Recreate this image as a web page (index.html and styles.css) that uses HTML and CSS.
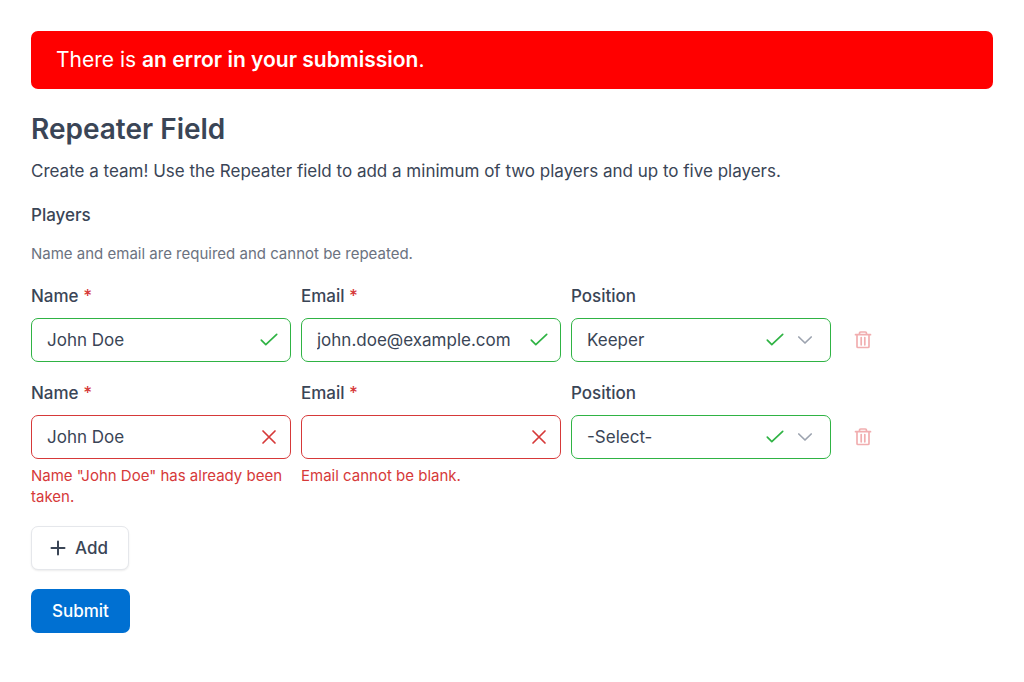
FILE: index.html
```html
<!DOCTYPE html>
<html lang="en">
<head>
    <meta charset="UTF-8">
    <meta name="viewport" content="width=device-width, initial-scale=1.0">
    <title>Repeater Field</title>
    <link rel="stylesheet" href="styles.css">
</head>
<body>

    <!-- Shared icons -->
    <svg class="sprite" aria-hidden="true">
        <symbol id="icon-check" viewBox="0 0 18 18"><path d="M1.3 9.2 L5.8 13.6 L16.7 3.4"/></symbol>
        <symbol id="icon-cross" viewBox="0 0 18 18"><path d="M3 3 L15 15 M15 3 L3 15"/></symbol>
        <symbol id="icon-chevron" viewBox="0 0 18 18"><path d="M2.8 6 L9 12 L15.2 6"/></symbol>
        <symbol id="icon-plus" viewBox="0 0 18 18"><path d="M9 2.5 V15.5 M2.5 9 H15.5"/></symbol>
        <symbol id="icon-trash" viewBox="0 0 18 18"><path d="M1.5 3.7 H16.5 M5.5 3.7 V2.2 Q5.5 1 6.7 1 H11.3 Q12.5 1 12.5 2.2 V3.7 M3 3.7 V15.5 Q3 16.5 4 16.5 H14 Q15 16.5 15 15.5 V3.7 M7.2 6.5 V13.8 M10.8 6.5 V13.8"/></symbol>
    </svg>

    <form class="form" novalidate>
        <div class="alert" role="alert">There is <strong>an error in your submission</strong>.</div>

        <h1>Repeater Field</h1>
        <p class="intro">Create a team! Use the Repeater field to add a minimum of two players and up to five players.</p>

        <h2>Players</h2>
        <p class="hint">Name and email are required and cannot be repeated.</p>

        <div class="row">
            <div class="field valid">
                <label for="name-1">Name <span class="required">*</span></label>
                <div class="control">
                    <input type="text" id="name-1" value="John Doe" required>
                    <svg class="icon status"><use href="#icon-check"/></svg>
                </div>
            </div>
            <div class="field valid">
                <label for="email-1">Email <span class="required">*</span></label>
                <div class="control">
                    <input type="email" id="email-1" value="john.doe@example.com" required>
                    <svg class="icon status"><use href="#icon-check"/></svg>
                </div>
            </div>
            <div class="field valid">
                <label for="position-1">Position</label>
                <div class="control has-select">
                    <select id="position-1">
                        <option>-Select-</option>
                        <option selected>Keeper</option>
                    </select>
                    <svg class="icon status"><use href="#icon-check"/></svg>
                    <svg class="icon chevron"><use href="#icon-chevron"/></svg>
                </div>
            </div>
            <button type="button" class="btn-remove" aria-label="Remove player">
                <svg class="icon"><use href="#icon-trash"/></svg>
            </button>
        </div>

        <div class="row">
            <div class="field invalid">
                <label for="name-2">Name <span class="required">*</span></label>
                <div class="control">
                    <input type="text" id="name-2" value="John Doe" aria-describedby="name-2-error" required>
                    <svg class="icon status"><use href="#icon-cross"/></svg>
                </div>
                <p class="error" id="name-2-error">Name "John Doe" has already been taken.</p>
            </div>
            <div class="field invalid">
                <label for="email-2">Email <span class="required">*</span></label>
                <div class="control">
                    <input type="email" id="email-2" aria-describedby="email-2-error" required>
                    <svg class="icon status"><use href="#icon-cross"/></svg>
                </div>
                <p class="error" id="email-2-error">Email cannot be blank.</p>
            </div>
            <div class="field valid">
                <label for="position-2">Position</label>
                <div class="control has-select">
                    <select id="position-2">
                        <option selected>-Select-</option>
                        <option>Keeper</option>
                    </select>
                    <svg class="icon status"><use href="#icon-check"/></svg>
                    <svg class="icon chevron"><use href="#icon-chevron"/></svg>
                </div>
            </div>
            <button type="button" class="btn-remove" aria-label="Remove player">
                <svg class="icon"><use href="#icon-trash"/></svg>
            </button>
        </div>

        <div class="actions">
            <button type="button" class="btn btn-add">
                <svg class="icon"><use href="#icon-plus"/></svg>
                Add
            </button>
            <button type="submit" class="btn btn-submit">Submit</button>
        </div>
    </form>

</body>
</html>
```
FILE: styles.css
```css
* {
    box-sizing: border-box;
}

body {
    margin: 0;
    font-family: Inter, "Liberation Sans", sans-serif;
    font-size: 17px;
    line-height: 24px;
    color: #3a4556;
    background-color: #fff;
}

h1, h2, p {
    margin: 0;
}

.sprite {
    display: none;
}

.form {
    padding: 31px;
}

.alert {
    padding: 14px 25px;
    border-radius: 7px;
    background-color: #f00;
    color: #fff;
    font-size: 21px;
    line-height: 30px;
}

.alert strong {
    font-weight: 600;
}

h1 {
    margin-top: 23px;
    font-size: 28px;
    font-weight: 600;
    line-height: 34px;
}

.intro {
    margin-top: 13px;
}

h2 {
    margin-top: 20px;
    font-size: 17px;
    font-weight: 500;
    line-height: 24px;
}

.hint {
    margin: 16px 0 20px;
    color: #6b7280;
    font-size: 15px;
    line-height: 21px;
}

/* Repeater rows */
.row {
    display: grid;
    grid-template-columns: repeat(3, 1fr) 152px;
    gap: 10px;
    align-items: start;
    margin-bottom: 19px;
}

label {
    display: block;
    margin-bottom: 10px;
    font-weight: 500;
}

.required {
    color: #d63939;
}

.control {
    position: relative;
}

input, select {
    display: block;
    width: 100%;
    height: 44px;
    padding: 0 44px 0 15px;
    border: 1px solid #d1d5db;
    border-radius: 7px;
    background-color: #fff;
    color: #3a4556;
    font: inherit;
    appearance: none;
}

.valid input, .valid select {
    border-color: #2fb344;
}

.invalid input {
    border-color: #d63939;
}

.icon {
    display: block;
    width: 18px;
    height: 18px;
    fill: none;
    stroke: currentColor;
    stroke-width: 1.7;
    stroke-linecap: round;
    stroke-linejoin: round;
}

.control .icon {
    position: absolute;
    top: 13px;
    right: 13px;
    pointer-events: none;
}

.valid .status {
    color: #2fb344;
}

.invalid .status {
    color: #d63939;
}

.has-select .status {
    right: 47px;
}

.control .chevron {
    right: 17px;
    color: #9ca3af;
}

.error {
    margin-top: 6px;
    color: #d63939;
    font-size: 15px;
    line-height: 21px;
}

.btn-remove {
    display: flex;
    align-items: center;
    justify-content: center;
    width: 44px;
    height: 44px;
    margin-top: 34px;
    padding: 0;
    border: none;
    background: none;
    color: #f1aeb0;
    cursor: pointer;
}

.actions {
    display: flex;
    flex-direction: column;
    align-items: flex-start;
    gap: 19px;
}

.btn {
    display: flex;
    align-items: center;
    gap: 8px;
    height: 44px;
    border: 1px solid transparent;
    border-radius: 7px;
    font: inherit;
    font-weight: 500;
    cursor: pointer;
}

.btn-add {
    padding: 0 20px 0 17px;
    border-color: #e5e7eb;
    background-color: #fff;
    color: #3a4556;
    box-shadow: 0 1px 2px rgba(0, 0, 0, 0.08);
}

.btn-add .icon {
    stroke-width: 2;
}

.btn-submit {
    padding: 0 20px;
    background-color: #0070d2;
    color: #fff;
}
```
